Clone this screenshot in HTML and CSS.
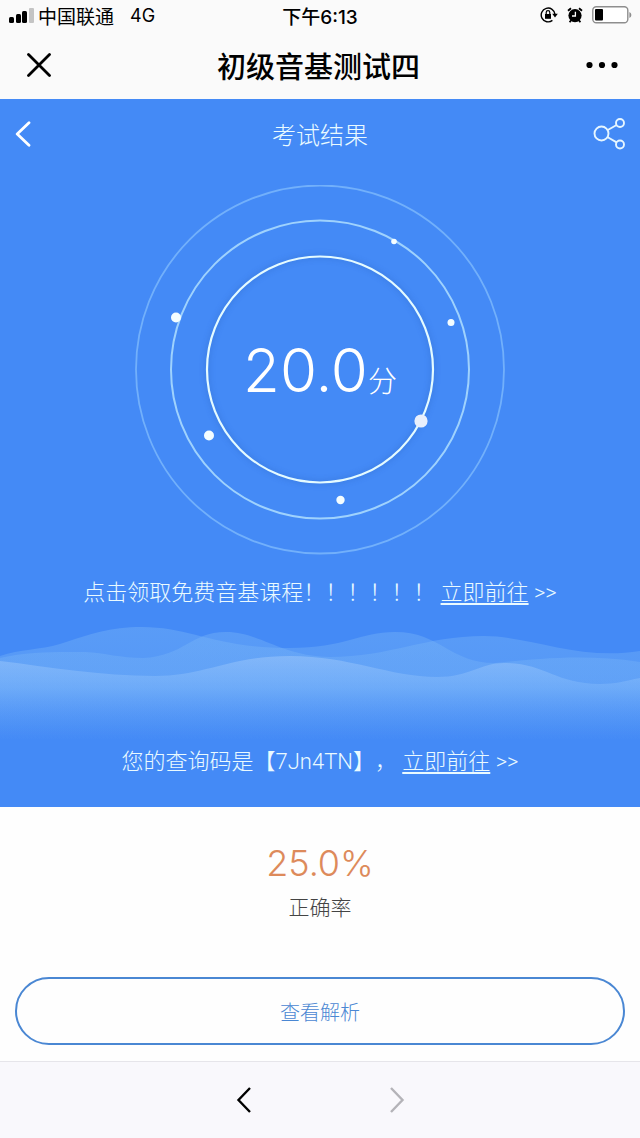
FILE: index.html
```
<!DOCTYPE html>
<html lang="zh-CN">
<head>
    <meta charset="UTF-8">
    <meta name="viewport" content="width=device-width, initial-scale=1.0">
    <title>初级音基测试四</title>
    <link rel="stylesheet" href="styles.css">
</head>
<body>
    <div class="status-bar">
        <div class="status-left">
            <svg width="26" height="16" viewBox="0 0 26 16">
                <rect x="1" y="10" width="5" height="6" rx="1.5"/>
                <rect x="8" y="7" width="5" height="9" rx="1.5"/>
                <rect x="14" y="4" width="5" height="12" rx="1.5"/>
                <rect x="21" y="1" width="5" height="15" rx="1" fill="#c4c4c4"/>
            </svg>
            <span>中国联通</span>
            <span class="network">4G</span>
        </div>
        <div class="status-time">下午6:13</div>
        <div class="status-right">
            <svg width="18" height="16" viewBox="0 0 18 16">
                <path d="M12.4 13.4A6.9 6.9 0 1 1 15 7.4" fill="none" stroke="#000" stroke-width="1.4"/>
                <path d="M12.2 6.8h5.6L15 10.4z"/>
                <rect x="5" y="7" width="6" height="4.8"/>
                <path d="M6.2 7V5.4a1.8 1.8 0 0 1 3.6 0V7" fill="none" stroke="#000" stroke-width="1.2"/>
            </svg>
            <svg width="16" height="16" viewBox="0 0 16 16">
                <circle cx="8" cy="8.6" r="6.6"/>
                <path d="M1 3.8l3-2.6M15 3.8l-3-2.6M4 13.4l-1.4 1.8M12 13.4l1.4 1.8" stroke="#000" stroke-width="1.8"/>
                <path d="M8.4 4.8V9H5" fill="none" stroke="#fff" stroke-width="1.3"/>
            </svg>
            <svg width="40" height="18" viewBox="0 0 40 18">
                <rect x="0.8" y="0.8" width="35" height="16" rx="3.5" fill="#fff" stroke="#8e8e8e" stroke-width="1.4"/>
                <rect x="3" y="3" width="8" height="11.6" rx="1"/>
                <path d="M37.4 6v6q2-1 2-3t-2-3z" fill="#8e8e8e"/>
            </svg>
        </div>
    </div>

    <header class="nav-bar">
        <button type="button" aria-label="关闭">
            <svg width="24" height="24" viewBox="0 0 24 24">
                <path d="M1.5 1.5l21 21M22.5 1.5l-21 21" stroke="#000" stroke-width="2.8" stroke-linecap="round"/>
            </svg>
        </button>
        <h1>初级音基测试四</h1>
        <button type="button" aria-label="更多">
            <svg width="32" height="8" viewBox="0 0 32 8">
                <circle cx="3.5" cy="4" r="3.1"/>
                <circle cx="16" cy="4" r="3.1"/>
                <circle cx="28.5" cy="4" r="3.1"/>
            </svg>
        </button>
    </header>

    <main>
        <section class="result">
            <div class="result-head">
                <button type="button" aria-label="返回">
                    <svg width="16" height="26" viewBox="0 0 16 26">
                        <path d="M14 1.8L2.2 13L14 24.2" fill="none" stroke="#fff" stroke-width="2.8" stroke-linecap="round" stroke-linejoin="round"/>
                    </svg>
                </button>
                <h2>考试结果</h2>
                <button type="button" aria-label="分享">
                    <svg width="32" height="32" viewBox="0 0 32 32" fill="none" stroke="#e6f6ff" stroke-width="1.9">
                        <circle cx="8.5" cy="15.5" r="7"/>
                        <circle cx="27" cy="5" r="4"/>
                        <circle cx="27" cy="26.5" r="4"/>
                        <path d="M14.8 12l8.8-5M14.8 19.2l8.8 5.2"/>
                    </svg>
                </button>
            </div>

            <div class="gauge">
                <svg width="370" height="370" viewBox="0 0 370 370" fill="none">
                    <circle cx="185" cy="184.5" r="184" stroke="#72b0fb" stroke-width="1.8"/>
                    <circle cx="185" cy="184.5" r="149" stroke="#9fd2fd" stroke-width="2"/>
                    <circle class="gauge-ring" cx="185" cy="184.5" r="113" stroke="#e4fbff" stroke-width="2.2"/>
                    <g fill="#f4fdff">
                        <circle cx="259" cy="56.5" r="2.8"/>
                        <circle cx="41" cy="132.5" r="5"/>
                        <circle cx="316" cy="137.5" r="3.5"/>
                        <circle cx="74" cy="250.5" r="5"/>
                        <circle cx="205.5" cy="315" r="4.2"/>
                        <circle cx="286" cy="236" r="6.6" fill="#e9effc"/>
                    </g>
                </svg>
                <p class="score">20.0<span>分</span></p>
            </div>

            <p class="tip">点击领取免费音基课程！！！！！！ <a href="#course">立即前往</a> &gt;&gt;</p>

            <svg class="waves" viewBox="0 0 640 120" preserveAspectRatio="none">
                <defs>
                    <linearGradient id="back" gradientUnits="userSpaceOnUse" x1="0" y1="0" x2="0" y2="120">
                        <stop offset="0" stop-color="#7cb8f8" stop-opacity="0.4"/>
                        <stop offset="0.5" stop-color="#7cb8f8" stop-opacity="0.3"/>
                        <stop offset="1" stop-color="#7cb8f8" stop-opacity="0"/>
                    </linearGradient>
                    <linearGradient id="front" gradientUnits="userSpaceOnUse" x1="0" y1="34" x2="0" y2="120">
                        <stop offset="0" stop-color="#a4cbfb" stop-opacity="0.5"/>
                        <stop offset="0.4" stop-color="#84bcfb" stop-opacity="0.4"/>
                        <stop offset="1" stop-color="#448af6" stop-opacity="0"/>
                    </linearGradient>
                </defs>
                <path fill="url(#back)" d="M0 36C20 29 40 30 60 24C90 14 110 7 142 7C190 7 215 28 290 28C345 28 360 12 395 12C440 12 450 43 495 43C530 40 580 33 640 42V120H0Z"/>
                <path fill="url(#back)" d="M0 38C30 31 60 32 85 32C105 33 120 38 143 38C185 36 190 12 226 12C260 12 280 36 330 37C390 37 425 16 484 16C530 16 580 41 640 31V120H0Z"/>
                <path fill="url(#front)" d="M0 41C50 47 100 56 155 56C205 56 230 36 290 36C350 36 390 57 437 57C470 57 480 43 504 43C545 43 555 64 600 64C615 64 625 61 640 58V120H0Z"/>
            </svg>

            <p class="tip">您的查询码是【7Jn4TN】， <a href="#query">立即前往</a> &gt;&gt;</p>
        </section>

        <section class="rate">
            <p class="rate-value">25.0%</p>
            <p class="rate-label">正确率</p>
            <button type="button" class="analysis">查看解析</button>
        </section>
    </main>

    <nav class="toolbar">
        <button type="button" aria-label="后退">
            <svg width="16" height="28" viewBox="0 0 16 28">
                <path d="M14 2L2.5 14L14 26" fill="none" stroke="#000" stroke-width="2.4"/>
            </svg>
        </button>
        <button type="button" aria-label="前进" disabled>
            <svg width="16" height="28" viewBox="0 0 16 28">
                <path d="M2 2l11.5 12L2 26" fill="none" stroke="#b4b3b8" stroke-width="2.4"/>
            </svg>
        </button>
    </nav>
</body>
</html>
```
FILE: styles.css
```
* {
    box-sizing: border-box;
}
body {
    margin: 0;
    min-height: 100vh;
    display: flex;
    flex-direction: column;
    font-family: Inter, "Noto Sans CJK SC", sans-serif;
    background: #fefefe;
    color: #000;
}
h1, h2, p {
    margin: 0;
}
svg {
    display: block;
}
button {
    padding: 0;
    border: 0;
    background: none;
    font-family: inherit;
}

/* phone status bar */
.status-bar {
    display: grid;
    grid-template-columns: 1fr auto 1fr;
    align-items: center;
    height: 32px;
    padding: 0 8px 2px;
    background: #fafafa;
    font-size: 19px;
}
.status-left, .status-right {
    display: flex;
    align-items: center;
    gap: 4px;
}
.network {
    margin-left: 12px;
    font-size: 18px;
}
.status-time {
    font-weight: 500;
}
.status-right {
    justify-content: flex-end;
    gap: 9px;
}

.nav-bar {
    display: flex;
    align-items: center;
    justify-content: space-between;
    height: 67px;
    padding: 0 22px 2px 27px;
    background: #fafafa;
}
.nav-bar h1 {
    font-size: 29px;
    font-weight: 500;
}

/* blue result panel */
.result {
    height: 708px;
    background: #448af6;
    color: #eafaff;
    font-weight: 300;
}
.result-head {
    display: flex;
    align-items: center;
    justify-content: space-between;
    height: 69px;
    padding: 0 15px;
}
.result-head button {
    width: 32px;
}
.result-head h2 {
    font-size: 24px;
    font-weight: 300;
}
.gauge {
    display: grid;
    place-items: center;
    margin: 17px 0 22px;
}
.gauge > * {
    grid-area: 1 / 1;
}
.gauge-ring {
    filter: drop-shadow(0 0 3px rgba(20, 70, 160, 0.4));
}
.score {
    font-size: 60px;
    color: #fff;
}
.score span {
    font-size: 29px;
}
.tip {
    font-family: Roboto, "Noto Sans CJK SC", sans-serif;
    font-size: 22px;
    line-height: 32px;
    text-align: center;
    text-spacing-trim: space-all;
}
.tip a {
    color: inherit;
    text-underline-offset: 3px;
}
.waves {
    width: 100%;
    height: 120px;
    margin: 11px 0 6px;
}

.rate {
    padding: 32px 15px 16px;
    text-align: center;
    font-weight: 300;
}
.rate-value {
    font-size: 36px;
    line-height: 48px;
    color: #dd8a5b;
}
.rate-label {
    font-size: 21px;
    line-height: 32px;
    margin: 5px 0 53px;
    color: #444;
}
.analysis {
    width: 100%;
    height: 68px;
    border: 2px solid #4a87d3;
    border-radius: 34px;
    font-size: 20px;
    font-weight: 300;
    color: #4a87d3;
}

.toolbar {
    flex: 1;
    display: flex;
    align-items: center;
    justify-content: center;
    gap: 137px;
    min-height: 76px;
    border-top: 1px solid #e6e5ea;
    background: #f9f8fc;
}
```
